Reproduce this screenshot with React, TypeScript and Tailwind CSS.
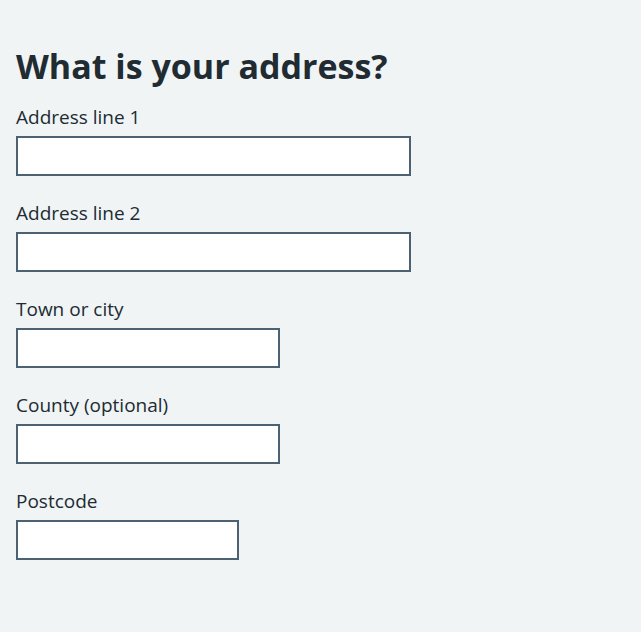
import React from "react";

const fields: { label: string; w: string }[] = [
  { label: "Address line 1", w: "w-[395px]" },
  { label: "Address line 2", w: "w-[395px]" },
  { label: "Town or city", w: "w-[264px]" },
  { label: "County (optional)", w: "w-[264px]" },
  { label: "Postcode", w: "w-[223px]" },
];

export default function App() {
  return (
    <div
      className="min-h-[632px] w-full bg-[#f0f4f5] text-[#212b32] pl-4 pt-[46px]"
      style={{ fontFamily: '"Open Sans", "Noto Sans", sans-serif' }}
    >
      <h1 className="text-[34px] leading-[40px] font-bold mb-[17px]">
        What is your address?
      </h1>
      <div className="flex flex-col gap-[23px]">
        {fields.map((f) => (
          <div key={f.label} className="flex flex-col">
            <label className="text-[19px] leading-[28px] mb-[5px]">{f.label}</label>
            <input
              type="text"
              className={`${f.w} h-10 border-2 border-[#4c6272] bg-white outline-none`}
            />
          </div>
        ))}
      </div>
    </div>
  );
}
